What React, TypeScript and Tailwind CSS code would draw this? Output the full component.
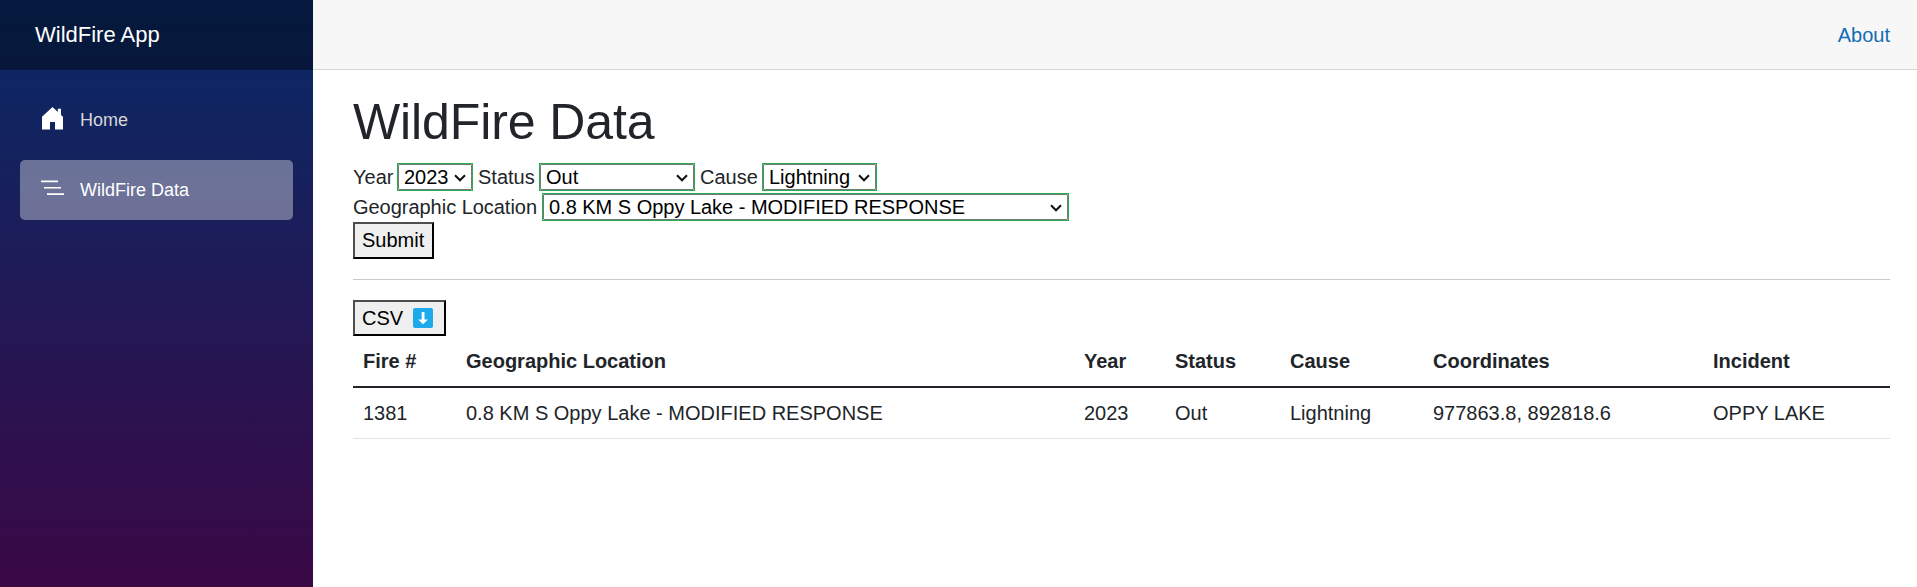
import React from "react";

const columns = ["Fire #", "Geographic Location", "Year", "Status", "Cause", "Coordinates", "Incident"];
const rows = [
  ["1381", "0.8 KM S Oppy Lake - MODIFIED RESPONSE", "2023", "Out", "Lightning", "977863.8, 892818.6", "OPPY LAKE"],
];

function Picker({ value, width }: { value: string; width: string }) {
  return (
    <span className={`relative flex h-[28px] border border-[#26b050] bg-white ${width}`}>
      <select className="h-full w-full appearance-none rounded-[1px] border border-[#767676] bg-white pl-[5px] text-[20px] leading-[24px] tracking-[-0.02px] text-black outline-none">
        <option>{value}</option>
      </select>
      <svg className="pointer-events-none absolute top-[10px] right-[6px]" width="12" height="8" viewBox="0 0 12 8" fill="none" stroke="#101010" strokeWidth="2">
        <path d="M1 1.300 6 6.300 11 1.300" />
      </svg>
    </span>
  );
}

export default function App() {
  return (
    <div className="flex h-[587px] overflow-hidden bg-white font-['Liberation_Sans',Arial,sans-serif] text-[20px] leading-[30px] text-[#212529]">
      <aside className="w-[313px] shrink-0 bg-[linear-gradient(180deg,rgb(7,43,103)_0px,#3a0845_590px)]">
        <div className="flex h-[70px] items-center bg-black/40 pl-[35px] text-[22px] text-white">WildFire App</div>
        <nav className="flex flex-col gap-[10px] px-[20px] pt-[20px] text-[18px]">
          <a className="flex h-[60px] items-center pl-[20px] text-[#d7d7d7]">
            <svg className="-mt-[2px] mr-[14px]" width="26" height="26" viewBox="0 0 26 26" fill="#fff">
              <path d="M12.500 1 2 10.800V23.500H10V16H15V23.500H23V10.800L21 9V2.800H17.800V6Z" />
            </svg>
            Home
          </a>
          <a className="flex h-[60px] items-center rounded-[5px] bg-white/37 pl-[20px] text-white">
            <svg className="-mt-[2px] mr-[14px]" width="26" height="26" viewBox="0 0 26 26" fill="#fff">
              <path d="M1 4.600h17v1.700H1zM4 10.900h17v1.700H4zM7 17.200h17v1.700H7z" />
            </svg>
            WildFire Data
          </a>
        </nav>
      </aside>
      <main className="flex min-w-0 flex-1 flex-col">
        <header className="flex h-[70px] shrink-0 items-center justify-end border-b border-[#d6d5d5] bg-[#f7f7f7] pr-[27px] text-[#136cb8]">
          <a>About</a>
        </header>
        <article className="flex flex-col items-start pr-[27px] pl-[40px] pt-[22px]">
          <h1 className="h-[60px] text-[50px] leading-[60px] font-normal tracking-[-0.1px]">WildFire Data</h1>
          <div className="mt-[10px] flex h-[30px] items-center">
            <span className="w-[44px]">Year</span>
            <Picker value="2023" width="w-[76px]" />
            <span className="ml-[5px] w-[61px]">Status</span>
            <Picker value="Out" width="w-[156px]" />
            <span className="ml-[5px] w-[62px]">Cause</span>
            <Picker value="Lightning" width="w-[115px]" />
          </div>
          <div className="flex h-[30px] items-center">
            <span className="w-[189px] tracking-[-0.03px]">Geographic Location</span>
            <Picker value="0.8 KM S Oppy Lake - MODIFIED RESPONSE" width="w-[527px]" />
          </div>
          <button className="flex h-[37px] w-[81px] items-center border-2 border-[#000] border-t-[#4d4d4d] border-l-[#4d4d4d] bg-[#efefef] pb-[2px] pl-[7px] text-black">Submit</button>
          <hr className="mt-[20px] w-full border-t border-[#c8c9ca]" />
          <button className="mt-[20px] flex h-[36px] w-[93px] items-center border-2 border-[#000] border-t-[#4d4d4d] border-l-[#4d4d4d] bg-[#efefef] pl-[7px] text-black">
            CSV
            <svg className="-mt-px ml-[10px]" width="20" height="20" viewBox="0 0 20 20">
              <rect width="20" height="20" rx="2" fill="#1daaeb" />
              <path d="M8.700 4h2.800v7.500H15L10 16.300 5.200 11.500h3.500z" fill="#fff" />
            </svg>
          </button>
          <table className="w-full table-fixed border-collapse text-left">
            <colgroup>
              <col className="w-[103px]" />
              <col className="w-[618px]" />
              <col className="w-[91px]" />
              <col className="w-[115px]" />
              <col className="w-[143px]" />
              <col className="w-[280px]" />
              <col />
            </colgroup>
            <thead>
              <tr className="h-[51px] border-b-2 border-[#212529]">
                {columns.map((c) => (
                  <th key={c} className="px-[10px] py-0 font-bold">{c}</th>
                ))}
              </tr>
            </thead>
            <tbody>
              {rows.map((r) => (
                <tr key={r[0]} className="h-[51px] border-b border-[#dee2e6]">
                  {r.map((c, i) => (
                    <td key={i} className="px-[10px] py-0">{c}</td>
                  ))}
                </tr>
              ))}
            </tbody>
          </table>
        </article>
      </main>
    </div>
  );
}
